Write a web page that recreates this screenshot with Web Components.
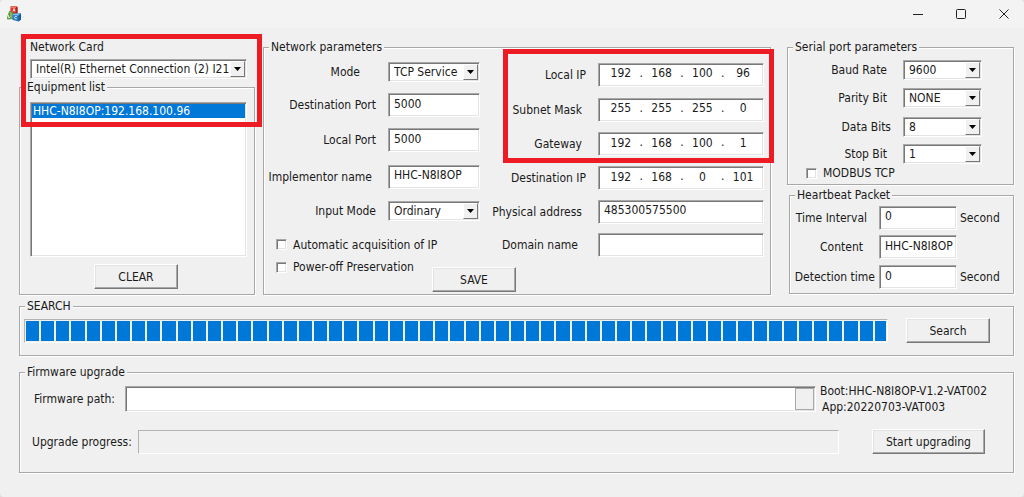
<!DOCTYPE html>
<html lang="en">
<head>
<meta charset="utf-8">
<title>Device configuration</title>
<style>
  html { background: #dcdcdc; }
  body {
    margin: 0;
    font: 12px/16px "DejaVu Sans Condensed", "Noto Sans", sans-serif;
    color: #1a1a1a;
    --face: #f0f0f0;
    --shade: #a8a8a8;
    --dark: #787878;
    --accent: #0078d7;
    --mark: #ed1c24;
  }
</style>
</head>
<body>
<config-window></config-window>

<script>
const SUNKEN = `
  box-sizing: border-box;
  border: 1px solid;
  border-color: var(--shade) #fff #fff var(--shade);
  box-shadow: inset 1px 1px 0 var(--dark), inset -1px -1px 0 #e3e3e3;
`;
const RESET = `
  *, *::before, *::after { box-sizing: border-box; }
  input, select, button { font: inherit; color: inherit; border-radius: 0; margin: 0; }
`;

class BaseElement extends HTMLElement {
  constructor() { super(); this.attachShadow({ mode: 'open' }); }
  connectedCallback() {
    if (this.shadowRoot.childNodes.length) return;
    this.shadowRoot.innerHTML = `<style>${RESET}${this.styles()}</style>${this.markup()}`;
  }
  attr(name, fallback = '') { return this.getAttribute(name) ?? fallback; }
}

customElements.define('group-box', class extends BaseElement {
  styles() { return `
    :host { display: block; }
    fieldset {
      margin: 0; padding: 0; min-width: 0; height: 100%;
      border: 1px solid var(--shade);
      box-shadow: 1px 1px 0 #fff, inset 1px 1px 0 #fff;
    }
    legend { margin-left: 5px; padding: 0 2px; background: var(--face); }
  `; }
  markup() { return `<fieldset><legend>${this.attr('label')}</legend><slot></slot></fieldset>`; }
});

customElements.define('push-button', class extends BaseElement {
  styles() { return `
    :host { display: block; width: 84px; }
    button {
      display: block; width: 100%; height: 25px; padding: 0;
      background: var(--face);
      border: 1px solid; border-color: #fff var(--dark) var(--dark) #fff;
      box-shadow: inset -1px -1px 0 var(--shade), inset 1px 1px 0 #e3e3e3;
    }
  `; }
  markup() { return `<button type="button"><slot></slot></button>`; }
});

customElements.define('check-field', class extends BaseElement {
  styles() { return `
    :host { display: block; }
    label { display: flex; align-items: center; gap: 6px; height: 12px; white-space: nowrap; }
    input { appearance: none; flex: none; width: 11px; height: 11px; background: #fff; ${SUNKEN} }
    input:checked { background: var(--accent); }
  `; }
  markup() { return `<label><input type="checkbox"><slot></slot></label>`; }
});

/* A caption tied to a text box, a drop-down or a four-part IP address. */
customElements.define('form-field', class extends BaseElement {
  styles() { return `
    :host { display: flex; align-items: center; min-width: 0; }
    .caption { flex: 1; text-align: right; white-space: nowrap; margin-right: ${this.attr('gap', 16)}px; }
    .box { flex: none; width: var(--control, 92px); background: #fff; ${SUNKEN} }
    input.box { height: 24px; padding: 0 0 3px 5px; }
    .drop { position: relative; height: 20px; }
    .drop select {
      appearance: none; display: block; width: 100%; height: 18px;
      padding: 0 16px 0 5px; border: 0; background: transparent; line-height: 18px;
    }
    .drop::after {
      content: ""; position: absolute; top: 1px; right: 1px; bottom: 1px; width: 15px;
      border: 1px solid; border-color: #fff var(--dark) var(--dark) #fff;
      background: var(--face); pointer-events: none;
    }
    .drop svg { position: absolute; z-index: 1; right: 5px; top: 7px; pointer-events: none; }
    .ip { display: flex; height: 24px; padding: 0 2px 3px 4px; }
    .ip input { flex: 1; min-width: 0; padding: 0; border: 0; background: transparent; text-align: center; }
    .ip span { width: 5px; text-align: center; line-height: 18px; }
    .unit { width: 56px; padding-left: 3px; }
  `; }
  markup() {
    const value = this.attr('value'), label = this.attr('label'), unit = this.attr('unit');
    const kind = this.attr('kind', 'text');
    const tail = unit ? `<span class="unit">${unit}</span>` : '';
    if (kind === 'ip') {
      const parts = value.split('.').map((p, i) =>
        `<input ${i ? '' : 'id="c"'} aria-label="${label} part ${i + 1}" value="${p}">`);
      return `<label class="caption" for="c">${label}</label><div class="box ip">${parts.join('<span>.</span>')}</div>`;
    }
    if (kind === 'select') {
      return `${label ? `<label class="caption" for="c">${label}</label>` : ''}
        <div class="box drop"><select id="c" aria-label="${label || 'Network Card'}"><option>${value}</option></select>
        <svg width="7" height="4" viewBox="0 0 7 4"><path d="M0 0h7L3.500 4z" fill="#000"/></svg></div>`;
    }
    return `<label class="caption" for="c">${label}</label><input class="box" id="c" value="${value}">${tail}`;
  }
});

customElements.define('device-list', class extends BaseElement {
  styles() { return `
    :host { display: block; }
    select {
      display: block; width: 100%; height: 155px; padding: 1px; overflow: hidden;
      background: #fff; outline: 0; ${SUNKEN}
    }
    option { padding: 0 0 0 1px; min-height: 14px; line-height: 14px; }
    option:checked {
      background: var(--accent) linear-gradient(var(--accent), var(--accent));
      color: #fff; -webkit-text-fill-color: #fff;
    }
  `; }
  markup() { return `<select size="10" aria-label="Equipment list"><option selected>HHC-N8I8OP:192.168.100.96</option></select>`; }
});

customElements.define('progress-track', class extends BaseElement {
  styles() { return `
    :host {
      display: flex; gap: 2px; height: 24px; padding: 1px; flex: 1; min-width: 0; box-sizing: border-box;
      border: 1px solid; border-color: #b4b4b4 #fff #fff #b4b4b4;
    }
    i { flex: 13; background: var(--accent); }
    i:last-child { flex: 11; }
  `; }
  markup() { return '<i></i>'.repeat(Number(this.attr('blocks', 0))); }
  connectedCallback() {
    super.connectedCallback();
    this.setAttribute('role', 'progressbar');
  }
});

customElements.define('title-bar', class extends BaseElement {
  styles() { return `
    :host { display: flex; align-items: center; justify-content: space-between; height: 28px; padding: 0 6px; background: #f3f3f3; }
    svg { display: block; }
    nav { display: flex; }
    button { width: 43px; height: 28px; padding: 0; border: 0; background: none; display: grid; place-items: center; }
    button:last-child { width: 28px; margin-left: 8px; }
  `; }
  markup() { return `
    <svg width="16" height="16" viewBox="0 0 16 16" aria-hidden="true">
      <path d="M4.500 1Q4.500 0 5.500 0l5 .3q1 0 1 1.200V7L9 8.500 4.300 7z" fill="#d63a2c"/>
      <path d="M10 1.500l1.500-.5v6L9.500 8z" fill="#a82218"/>
      <path d="M5 .5h5.500L9.500 2H4.500z" fill="#ee7a6c"/>
      <path d="M3 5.500q.3-.8 1.200-.5L7 6.500 6.500 13l-4.700.5Q.8 13.200 1 12z" fill="#569336"/>
      <path d="M3.500 5.500 6.500 7 5.500 13l-1-.3z" fill="#83b45c"/>
      <path d="M6.500 8.500q0-1 1-1L14 7q1 0 1 1v5.500l-2.500 2L7 14q-.8-.2-.8-1z" fill="#2b7fc0"/>
      <path d="M6.800 8 14.500 7.300 12.500 9.500 7 9z" fill="#86c3ec"/>
      <path d="M12.500 9.500 15 7.500v6l-2.500 2z" fill="#195a96"/>
      <path d="M7 5.500 8 2.500l1 3M7.300 4.500h1.500M10.800 10.600q-2.300-.6-2.300 1t2.300 1.200M2.500 9v2.800q2-.2 1.500-1.400" stroke="#fff" stroke-opacity=".8" stroke-width=".9" fill="none"/>
    </svg>
    <nav>
      <button type="button" aria-label="Minimize"><svg width="10" height="10"><path d="M0 5.500h10" stroke="#222"/></svg></button>
      <button type="button" aria-label="Maximize"><svg width="10" height="10"><rect x=".5" y=".5" width="9" height="9" rx="1" fill="none" stroke="#222"/></svg></button>
      <button type="button" aria-label="Close"><svg width="10" height="10"><path d="M.5.5l9 9M9.500.5l-9 9" stroke="#222"/></svg></button>
    </nav>`; }
});

customElements.define('config-window', class extends BaseElement {
  styles() { return `
    :host { display: block; min-height: 100vh; background: var(--face); border-radius: 4px; overflow: hidden; }
    main { padding: 11px 10px 20px 19px; }
    .top { display: grid; grid-template-columns: 236px minmax(0, 1fr) 227px; }
    .left { position: relative; display: flex; flex-direction: column; }
    .left > .title { padding-left: 11px; }
    .left > form-field { --control: 217px; margin: 4px 0 0 11px; }
    .left > group-box { flex: 1; }
    device-list { margin: 7px 7px 7px 10px; }
    .left push-button { margin: 0 auto 5px 74px; }
    .middle { margin: 0 16px 0 8px; }
    .params { display: grid; grid-template-columns: 168px 48px minmax(0, 1fr); grid-template-rows: auto 1fr 33px; }
    .ports { grid-column: 1 / 3; display: grid; grid-template-rows: 34px 32px 38px 35px 34px; }
    .address {
      position: relative; grid-column: 3; grid-row: 1 / 3; --control: 166px;
      display: grid; grid-template-rows: 35px 35px 34px 34px 33px 33px; padding: 2px 6px 0 0;
    }
    .params > check-field { grid-column: 1; margin-left: 12px; }
    .auto { align-self: center; }
    .params > push-button { grid-column: 2 / 4; grid-row: 3; margin-top: 6px; }
    .right { display: flex; flex-direction: column; gap: 2px; }
    .serial { display: grid; grid-template-rows: 29px 28px 29px 26px 14px; padding: 0 31px 3px 0; --control: 79px; }
    .serial check-field { margin-left: 18px; }
    .heart { margin-left: 2px; }
    .beat { display: grid; grid-template-rows: 29px 30px 30px; padding: 0 56px 1px 0; --control: 78px; }
    .beat form-field[unit] { margin-right: -56px; }
    .search { margin-top: 3px; }
    .bar { display: flex; align-items: center; padding: 4px 23px 12px 4px; gap: 18px; }
    .firmware { margin-top: 8px; }
    .path { display: flex; align-items: center; padding: 3px 0 0 14px; }
    .path label { width: 91px; }
    .file { flex: 1; display: flex; height: 26px; background: #fff; padding: 1px; ${SUNKEN} }
    .file input { flex: 1; min-width: 0; border: 0; padding: 0 4px; background: transparent; outline: 0; }
    .file button { width: 19px; padding: 0; background: var(--face); border: 1px solid var(--shade); }
    .version { width: 197px; padding-left: 4px; }
    .version p { margin: 0; }
    .version p + p { padding-left: 2px; }
    .upgrade { display: flex; align-items: center; padding: 14px 28px 18px 12px; }
    .upgrade .name { width: 106px; }
    .upgrade push-button { width: 113px; margin-left: 33px; }
    .mark { position: absolute; border: 5px solid var(--mark); pointer-events: none; }
    .left .mark { left: 2px; right: -7px; top: -5px; height: 93px; }
    .address .mark { left: 23px; right: -4px; top: -6px; height: 114px; }
  `; }
  markup() { return `
    <title-bar></title-bar>
    <main>
      <div class="top">
        <section class="left">
          <div class="title">Network Card</div>
          <form-field kind="select" value="Intel(R) Ethernet Connection (2) I21"></form-field>
          <group-box label="Equipment list">
            <device-list></device-list>
            <push-button>CLEAR</push-button>
          </group-box>
          <div class="mark"></div>
        </section>

        <group-box class="middle" label="Network parameters">
          <div class="params">
            <div class="ports">
              <form-field kind="select" label="Mode" value="TCP Service" gap="28"></form-field>
              <form-field label="Destination Port" value="5000" gap="12"></form-field>
              <form-field label="Local Port" value="5000" gap="12"></form-field>
              <form-field label="Implementor name" value="HHC-N8I8OP" gap="16"></form-field>
              <form-field kind="select" label="Input Mode" value="Ordinary" gap="12"></form-field>
            </div>
            <div class="address">
              <form-field kind="ip" label="Local IP" value="192.168.100.96" gap="12"></form-field>
              <form-field kind="ip" label="Subnet Mask" value="255.255.255.0" gap="16"></form-field>
              <form-field kind="ip" label="Gateway" value="192.168.100.1" gap="16"></form-field>
              <form-field kind="ip" label="Destination IP" value="192.168.0.101" gap="12"></form-field>
              <form-field label="Physical address" value="485300575500" gap="16"></form-field>
              <form-field label="Domain name" value="" gap="20"></form-field>
              <div class="mark"></div>
            </div>
            <check-field class="auto">Automatic acquisition of IP</check-field>
            <check-field>Power-off Preservation</check-field>
            <push-button>SAVE</push-button>
          </div>
        </group-box>

        <section class="right">
          <group-box label="Serial port parameters">
            <div class="serial">
              <form-field kind="select" label="Baud Rate" value="9600" gap="16"></form-field>
              <form-field kind="select" label="Parity Bit" value="NONE" gap="16"></form-field>
              <form-field kind="select" label="Data Bits" value="8" gap="12"></form-field>
              <form-field kind="select" label="Stop Bit" value="1" gap="16"></form-field>
              <check-field>MODBUS TCP</check-field>
            </div>
          </group-box>
          <group-box class="heart" label="Heartbeat Packet">
            <div class="beat">
              <form-field label="Time Interval" value="0" unit="Second" gap="12"></form-field>
              <form-field label="Content" value="HHC-N8I8OP" gap="16"></form-field>
              <form-field label="Detection time" value="0" unit="Second" gap="4"></form-field>
            </div>
          </group-box>
        </section>
      </div>

      <group-box class="search" label="SEARCH">
        <div class="bar">
          <progress-track blocks="57" aria-label="Search progress"></progress-track>
          <push-button>Search</push-button>
        </div>
      </group-box>

      <group-box class="firmware" label="Firmware upgrade">
        <div class="path">
          <label for="file">Firmware path:</label>
          <div class="file"><input id="file"><button type="button" aria-label="Browse"></button></div>
          <div class="version"><p>Boot:HHC-N8I8OP-V1.2-VAT002</p><p>App:20220703-VAT003</p></div>
        </div>
        <div class="upgrade">
          <span class="name">Upgrade progress:</span>
          <progress-track aria-label="Upgrade progress"></progress-track>
          <push-button>Start upgrading</push-button>
        </div>
      </group-box>
    </main>`; }
});
</script>
</body>
</html>
